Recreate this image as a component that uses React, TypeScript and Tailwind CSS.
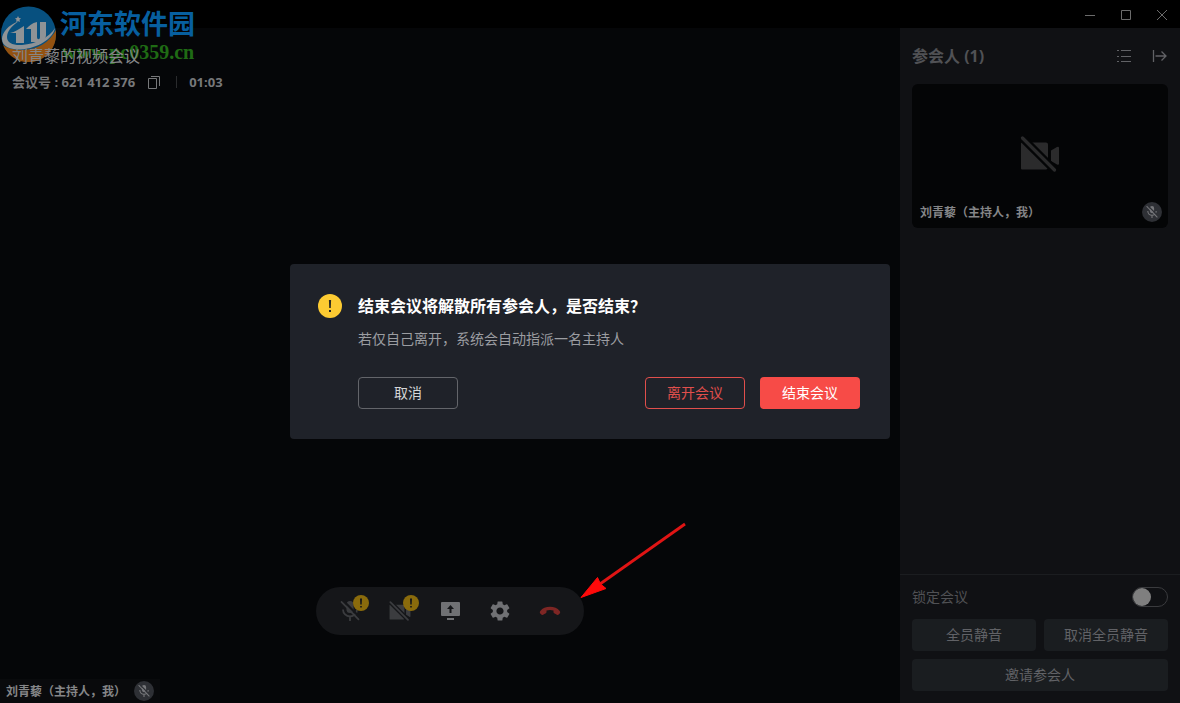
import type { ReactNode } from "react";
import { MdSettings } from "react-icons/md";

// ────────────────────────────────────────────
// Icons
// ────────────────────────────────────────────

function MicOffIcon({ className, gap }: { className: string; gap: string }) {
  return (
    <svg viewBox="0 0 20 20" className={className} fill="none" aria-hidden="true">
      <rect x="6.5" y="0" width="7" height="12" rx="3.5" fill="currentColor" />
      <path d="M3 8.5a7 7 0 0 0 14 0M10 15.5V20" stroke="currentColor" strokeWidth="1.8" />
      <path d="M2.4 -1.2 20.6 17.2" stroke={gap} strokeWidth="2.2" />
      <path d="M1 .4 19 18.8" stroke="currentColor" strokeWidth="1.8" />
    </svg>
  );
}

function CameraOffIcon({ className, gap }: { className: string; gap: string }) {
  return (
    <svg viewBox="0 0 40 36" className={className} fill="none" aria-hidden="true">
      <path
        d="M2 6.5h24a2 2 0 0 1 2 2v23a2 2 0 0 1-2 2H2a1 1 0 0 1-1-1v-25a1 1 0 0 1 1-1zM31 14.5l6-3.5q2-.8 2 1v15.5q0 2-2 1l-6-3.5z"
        fill="currentColor"
      />
      <path d="M2.5 2 35 34.5" stroke={gap} strokeWidth="8" />
      <path d="M2.5 2 34.5 34" stroke="currentColor" strokeWidth="3.2" strokeLinecap="round" />
    </svg>
  );
}

function ShareScreenIcon() {
  return (
    <svg viewBox="0 0 20 20" className="size-5" aria-hidden="true">
      <path
        fillRule="evenodd"
        d="M2 1h17a1 1 0 0 1 1 1v12a1 1 0 0 1-1 1H2a1 1 0 0 1-1-1V2a1 1 0 0 1 1-1zM10.500 4 7 8h2.500v4h2V8H14z"
        fill="currentColor"
      />
      <path d="M7 17h7v2H7z" fill="currentColor" />
    </svg>
  );
}

function HangUpIcon() {
  return (
    <svg viewBox="0 0 22 10" className="h-2.5 w-[22px]" aria-hidden="true">
      <path
        d="M11 .8c4 0 7.500 1.400 9.700 4.100.7.9.6 1.700 0 2.500l-1 1.200c-.5.6-1.200.6-1.800.2l-2.700-1.600c-.6-.4-.7-.8-.7-1.500v-1.300c-2.300-.7-4.700-.7-7 0v1.300c0 .7-.1 1.100-.7 1.500l-2.700 1.600c-.6.4-1.300.4-1.800-.2l-1-1.200c-.6-.8-.7-1.600 0-2.500C3.500 2.200 7 .8 11 .8z"
        fill="currentColor"
      />
    </svg>
  );
}

function SiteLogo() {
  return (
    <svg viewBox="0 0 56 56" className="size-14" aria-hidden="true">
      <circle cx="28.5" cy="28" r="27.5" fill="#07507f" />
      <path d="M3 39A27.500 27.500 0 0 0 56 28V24Q46 43 22 44 9 44 3 39z" fill="#935211" />
      {/* ring */}
      <path
        d="M19 15C8 19 2 27 2 33c0 7 8 11 19 10.500C38 42 53 33 55 22c-5 9-19 16-33 17-9 .5-15-2-15-8 0-5 4-11 12-16z"
        fill="#8f9396"
      />
      {/* figure and letter */}
      <path
        d="M24 20v17h-8V27h-6c5-1 9-4 14-7zM37 16v15c0 3 3 3 3 0V16h6v13c0 4-4 6-8 7h-7V23h-5c3-3 6-6 11-7z"
        fill="#8f9396"
      />
      <path d="m18 10 1 2 2 .3-1.500 1.500.4 2.200-1.900-1-1.900 1 .4-2.200L15 12.300l2-.3z" fill="#8f9396" />
    </svg>
  );
}

// ────────────────────────────────────────────
// Small parts
// ────────────────────────────────────────────

function MutedBadge() {
  return (
    <span className="flex size-5 shrink-0 items-center justify-center rounded-full bg-[#2e3035] text-[#77787b]">
      <MicOffIcon className="size-3" gap="#2e3035" />
    </span>
  );
}

function ToolButton({
  label,
  className,
  warning,
  children,
}: {
  label: string;
  className: string;
  warning?: boolean;
  children: ReactNode;
}) {
  return (
    <button
      aria-label={label}
      className={`relative flex h-12 w-[50px] items-center justify-center ${className}`}
    >
      {children}
      {warning && (
        <span className="absolute right-1.5 top-2 flex size-4 items-center justify-center rounded-full bg-[#8a6b0c] text-[#16171a]">
          <svg viewBox="0 0 16 16" className="size-4" aria-hidden="true">
            <path d="M7 3.500h2l-.3 6H7.300zM7.200 11h1.600v1.600H7.200z" fill="currentColor" />
          </svg>
        </span>
      )}
    </button>
  );
}

// ────────────────────────────────────────────
// Title bar
// ────────────────────────────────────────────

function TitleBar() {
  return (
    <header className="flex h-7 shrink-0 justify-end bg-black text-[#6b6b6b]">
      <button aria-label="最小化" className="flex w-9 items-center justify-center">
        <svg viewBox="0 0 12 12" className="size-3" fill="none" stroke="currentColor" aria-hidden="true">
          <path d="M1 7.500h10" />
        </svg>
      </button>
      <button aria-label="最大化" className="flex w-9 items-center justify-center">
        <svg viewBox="0 0 12 12" className="size-3" fill="none" stroke="currentColor" aria-hidden="true">
          <path d="M1.500 2.500h9v9h-9z" />
        </svg>
      </button>
      <button aria-label="关闭" className="flex w-9 items-center justify-center">
        <svg viewBox="0 0 12 12" className="size-3" fill="none" stroke="currentColor" aria-hidden="true">
          <path d="m1 2 10 10M11 2 1 12" />
        </svg>
      </button>
    </header>
  );
}

// ────────────────────────────────────────────
// Stage
// ────────────────────────────────────────────

function Stage() {
  return (
    <main className="flex min-w-0 flex-1 flex-col bg-[#050608]">
      <div className="relative z-10 px-3 pt-4">
        <h1 className="text-base leading-6 text-[#858688]">刘青藜的视频会议</h1>
        <div className="mt-1 flex h-5 items-center text-[13px] font-bold leading-5 text-[#77787a]">
          <span>会议号 : 621 412 376</span>
          <button aria-label="复制会议号" className="ml-3">
            <svg viewBox="0 0 14 14" className="size-3.5" fill="none" stroke="currentColor" aria-hidden="true">
              <path d="M1.500 3.500h8v10h-8zM4 1.500h8.500v9.500" />
            </svg>
          </button>
          <span className="ml-[15px] h-3 w-px bg-[#2a2b2d]" />
          <time className="ml-3">01:03</time>
        </div>
      </div>

      <div className="mt-auto flex justify-center">
        <div className="flex rounded-full bg-[#151619] px-[9px]">
          <ToolButton label="打开麦克风" className="text-[#3b3c3f]" warning>
            <MicOffIcon className="size-5" gap="#151619" />
          </ToolButton>
          <ToolButton label="打开摄像头" className="text-[#3b3c3f]" warning>
            <CameraOffIcon className="h-5 w-[22px]" gap="#151619" />
          </ToolButton>
          <ToolButton label="共享屏幕" className="text-[#707174]">
            <ShareScreenIcon />
          </ToolButton>
          <ToolButton label="设置" className="text-[#707174]">
            <MdSettings className="size-6" />
          </ToolButton>
          <ToolButton label="结束会议" className="text-[#7e2624]">
            <HangUpIcon />
          </ToolButton>
        </div>
      </div>

      <div className="mt-11 flex h-6 items-center gap-1.5 self-start bg-[#090a0c] px-1.5 text-xs font-bold text-[#858688]">
        <span className="w-[122px] whitespace-nowrap pt-0.5">刘青藜（主持人，我）</span>
        <MutedBadge />
      </div>
    </main>
  );
}

// ────────────────────────────────────────────
// Sidebar
// ────────────────────────────────────────────

function Sidebar() {
  return (
    <aside className="flex w-70 shrink-0 flex-col bg-[#101114] text-sm text-[#616266]">
      <div className="flex h-14 items-center px-3">
        <h2 className="flex-1 text-base font-bold text-[#505155]">参会人 (1)</h2>
        <button aria-label="列表视图">
          <svg viewBox="0 0 16 16" className="size-4" fill="none" stroke="currentColor" aria-hidden="true">
            <path d="M1 2.500h2M5 2.500h10M1 8.500h2M5 8.500h10M1 13.500h2M5 13.500h10" />
          </svg>
        </button>
        <button aria-label="收起" className="ml-5">
          <svg viewBox="0 0 16 16" className="size-4" fill="none" stroke="currentColor" aria-hidden="true">
            <path d="M1.500 2v12M3.500 8H14M9.500 3.500 14 8 9.500 12.500" strokeWidth="1.300" />
          </svg>
        </button>
      </div>

      <div className="mx-3 flex h-36 flex-col rounded-md bg-[#040506]">
        <div className="flex flex-1 items-end justify-center text-[#2b2b2c]">
          <CameraOffIcon className="h-9 w-10" gap="#040506" />
        </div>
        <div className="mt-6 flex h-8 items-center justify-between pl-2 pr-1.5 text-xs font-bold text-[#858688]">
          <span className="pt-0.5">刘青藜（主持人，我）</span>
          <MutedBadge />
        </div>
      </div>

      <div className="mt-auto border-t border-[#1b1d20] px-3 pb-3 pt-2">
        <label className="flex h-7 items-center justify-between text-[#505155]">
          锁定会议
          <input type="checkbox" role="switch" className="sr-only" />
          <span className="flex h-5 w-9 items-center rounded-full border border-[#3a3b3e]">
            <span className="size-[18px] rounded-full bg-[#7f7f7f]" />
          </span>
        </label>
        <div className="mt-2 grid grid-cols-2 gap-2">
          <button className="h-8 rounded-sm bg-[#1a1d20]">全员静音</button>
          <button className="h-8 rounded-sm bg-[#1a1d20]">取消全员静音</button>
          <button className="col-span-2 h-8 rounded-sm bg-[#1a1d20]">邀请参会人</button>
        </div>
      </div>
    </aside>
  );
}

// ────────────────────────────────────────────
// End meeting dialog
// ────────────────────────────────────────────

function EndMeetingDialog() {
  return (
    <div className="absolute inset-0 z-20 flex items-center justify-center">
      <section
        role="dialog"
        aria-labelledby="end-title"
        className="flex w-[600px] gap-4 rounded-sm bg-[#1f2229] px-7 py-[30px]"
      >
        <svg viewBox="0 0 24 24" className="size-6 shrink-0" aria-hidden="true">
          <circle cx="12" cy="12" r="12" fill="#fdcb32" />
          <path d="M10.900 6h2.200l-.3 8h-1.600zM11 16h2v2h-2z" fill="#2b2a22" />
        </svg>
        <div className="flex-1 pr-0.5">
          <h2 id="end-title" className="text-base font-bold leading-6 text-white">
            结束会议将解散所有参会人，是否结束？
          </h2>
          <p className="mt-[11px] text-sm text-[#9b9da1]">若仅自己离开，系统会自动指派一名主持人</p>
          <div className="mt-7 flex gap-[15px] text-sm">
            <button className="mr-auto h-8 w-25 rounded-sm border border-[#63656a] text-[#d5d6d8]">取消</button>
            <button className="h-8 w-25 rounded-sm border border-[#e04f4c] text-[#e04f4c]">离开会议</button>
            <button className="h-8 w-25 rounded-sm bg-[#f74b47] text-white">结束会议</button>
          </div>
        </div>
      </section>
    </div>
  );
}

// ────────────────────────────────────────────
// App
// ────────────────────────────────────────────

export default function App() {
  return (
    <div className="relative flex h-screen flex-col overflow-hidden bg-black font-['Open_Sans','Noto_Sans_CJK_SC',sans-serif]">
      <TitleBar />
      <div className="flex min-h-0 flex-1">
        <Stage />
        <Sidebar />
      </div>

      {/* Site mark */}
      <div className="pointer-events-none absolute left-0 top-1.5 flex gap-1">
        <SiteLogo />
        <div className="font-bold">
          <div className="text-[27px] leading-9 text-[#075f9f]">河东软件园</div>
          <div className="pl-0.5 font-['Liberation_Serif',serif] text-xl leading-5 text-[#1f6b14]">
            www.pc0359.cn
          </div>
        </div>
      </div>

      {/* Pointer arrow */}
      <svg
        viewBox="0 0 110 80"
        className="pointer-events-none absolute left-[580px] top-[520px] h-20 w-[110px]"
        aria-hidden="true"
      >
        <path d="M105 4 20 64" stroke="#e01414" strokeWidth="2.800" />
        <path d="M1 77.500 17.500 57.500l3 6.500 5.500 4.500z" fill="#ff0a0a" stroke="#ff0a0a" />
      </svg>

      <EndMeetingDialog />
    </div>
  );
}
